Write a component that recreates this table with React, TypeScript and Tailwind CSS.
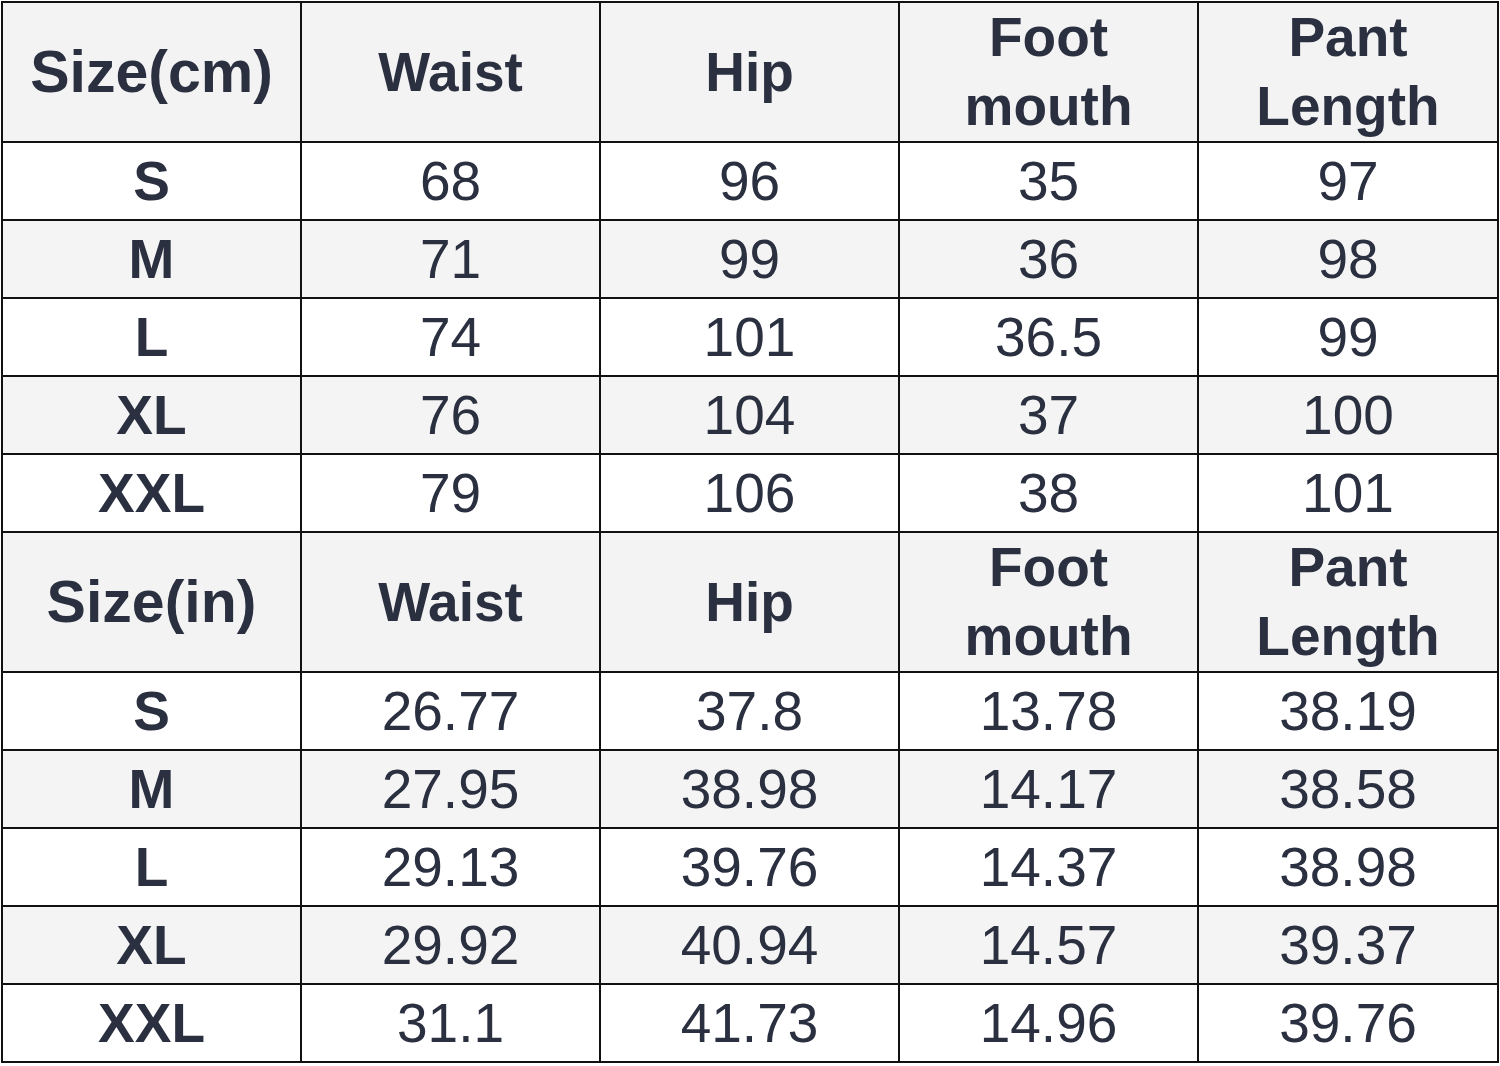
const headers = ["Waist", "Hip", "Foot mouth", "Pant Length"];

const cmRows = [
  ["S", "68", "96", "35", "97"],
  ["M", "71", "99", "36", "98"],
  ["L", "74", "101", "36.5", "99"],
  ["XL", "76", "104", "37", "100"],
  ["XXL", "79", "106", "38", "101"],
];

const inRows = [
  ["S", "26.77", "37.8", "13.78", "38.19"],
  ["M", "27.95", "38.98", "14.17", "38.58"],
  ["L", "29.13", "39.76", "14.37", "38.98"],
  ["XL", "29.92", "40.94", "14.57", "39.37"],
  ["XXL", "31.1", "41.73", "14.96", "39.76"],
];

const HeaderRow = ({ unit }: { unit: string }) => (
  <tr className="bg-[#f3f3f3]">
    <th className="h-[138px] border-2 border-[#111] p-0 text-[59px] font-bold leading-[69px]">Size({unit})</th>
    {headers.map((h) => (
      <th key={h} className="h-[138px] border-2 border-[#111] p-0 font-bold leading-[69px]">
        {h.split(" ").map((w) => (
          <div key={w}>{w}</div>
        ))}
      </th>
    ))}
  </tr>
);

const DataRows = ({ rows }: { rows: string[][] }) => (
  <>
    {rows.map((row, i) => (
      <tr key={row[0]} className={i % 2 === 1 ? "bg-[#f4f4f4]" : "bg-white"}>
        {row.map((cell, j) => (
          <td
            key={j}
            className={`h-[78px] border-2 border-[#111] p-0 text-center leading-none ${j === 0 ? "font-bold" : "font-normal"}`}
          >
            {cell}
          </td>
        ))}
      </tr>
    ))}
  </>
);

const App = () => {
  return (
    <div className="min-h-screen bg-white pl-px pt-px">
      <table className="w-[1496px] table-fixed border-collapse text-center text-[55px] text-[#2b3041] [font-family:'Liberation_Sans',Arial,sans-serif]">
        <colgroup>
          <col className="w-[299px]" />
          <col className="w-[299px]" />
          <col className="w-[299px]" />
          <col className="w-[299px]" />
          <col className="w-[300px]" />
        </colgroup>
        <tbody>
          <HeaderRow unit="cm" />
          <DataRows rows={cmRows} />
          <HeaderRow unit="in" />
          <DataRows rows={inRows} />
        </tbody>
      </table>
    </div>
  );
};

export default App;
